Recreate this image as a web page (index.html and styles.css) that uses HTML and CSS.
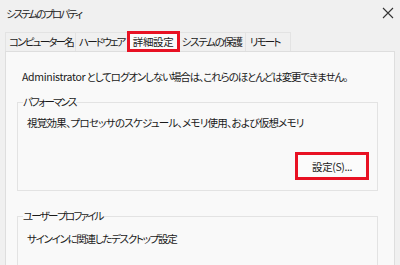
FILE: index.html
```html
<!DOCTYPE html>
<html lang="ja">
<head>
<meta charset="utf-8">
<link rel="stylesheet" href="styles.css">
</head>
<body>
<div class="window">
  <div class="titlebar">
    <span class="title">システムのプロパティ</span>
    <span class="close">
      <svg width="12" height="12" viewBox="0 0 12 12"><path d="M1 1L11 11M11 1L1 11" stroke="#333" stroke-width="1.1" fill="none"/></svg>
    </span>
  </div>
  <div class="tabs">
    <div class="tab">コンピューター名</div>
    <div class="tab">ハードウェア</div>
    <div class="tab selected">詳細設定</div>
    <div class="tab wide">システムの保護</div>
    <div class="tab last">リモート</div>
  </div>
  <div class="panel">
    <p class="notice"><span class="latin">Administrator</span> としてログオンしない場合は、これらのほとんどは変更できません。</p>
    <fieldset class="group perf">
      <legend>パフォーマンス</legend>
      <p class="desc">視覚効果、プロセッサのスケジュール、メモリ使用、および仮想メモリ</p>
      <div class="actions"><button class="btn highlighted">設定(S)...</button></div>
    </fieldset>
    <fieldset class="group profile">
      <legend>ユーザー プロファイル</legend>
      <p class="desc">サインインに関連したデスクトップ設定</p>
      <div class="actions"><button class="btn">設定(E)...</button></div>
    </fieldset>
  </div>
</div>
</body>
</html>
```
FILE: styles.css
```css
html, body {
  margin: 0;
  padding: 0;
  width: 400px;
  height: 265px;
  overflow: hidden;
  background: #f0f0f0;
  font-family: "Noto Sans CJK JP", "Noto Sans", sans-serif;
  font-size: 10.5px;
  font-feature-settings: "palt";
  color: #1a1a1a;
}
.latin {
  letter-spacing: -0.3px;
}
.window {
  display: flex;
  flex-direction: column;
}
.titlebar {
  height: 26px;
  display: flex;
  align-items: center;
  justify-content: space-between;
  padding: 0 6px 0 6px;
}
.title {
  color: #222;
  letter-spacing: -2px;
}
.close {
  display: flex;
  width: 12px;
  height: 12px;
}
.tabs {
  display: flex;
  margin-top: 6px;
  padding-left: 5px;
  height: 19px;
  align-items: flex-end;
}
.tab {
  height: 18px;
  line-height: 18px;
  padding: 0 2px 0 3px;
  border: 1px solid #e3e3e3;
  border-bottom: none;
  border-left: none;
  background: #f0f0f0;
  color: #1a1a1a;
  letter-spacing: -1.8px;
}
.tab:first-child { border-left: 1px solid #e3e3e3; }
.tab.wide { letter-spacing: -1.3px; padding: 0 3px; }
.tab.last { padding: 0 10px 0 4px; }
.tab.selected {
  outline: 3px solid #e81123;
  outline-offset: -2px;
  background: #fbfbfb;
  position: relative;
  z-index: 1;
  padding: 0 4px 0 5px;
  letter-spacing: -0.3px;
}
.panel {
  margin: 0 5px;
  height: 220px;
  background: #f9f9f9;
  border: 1px solid #dedede;
  padding: 0 16px 0 11px;
}
.notice {
  margin: 17px 0 0 5px;
  line-height: 16px;
  white-space: nowrap;
  letter-spacing: -1.1px;
}
.group {
  margin: 10px 0 0 0;
  padding: 0 0 0 9px;
  border: 1px solid #e3e3e3;
  border-radius: 0;
}
.group legend {
  padding: 0;
  margin-left: -4px;
  line-height: 14px;
  letter-spacing: -1.8px;
}
.desc {
  margin: 6px 0 0 0;
  line-height: 16px;
  white-space: nowrap;
  letter-spacing: -1.3px;
}
.perf .desc { letter-spacing: -0.75px; }
.profile .desc { margin-top: 8px; }
.actions {
  display: flex;
  justify-content: flex-end;
  padding-right: 8px;
}
.perf .actions { margin-top: 21px; height: 38px; }
.profile { margin-top: 18px; }
.profile .actions { margin-top: 20px; }
.btn {
  font: inherit;
  letter-spacing: -0.4px;
  width: 74px;
  height: 28px;
  border: 1px solid #d0d0d0;
  border-radius: 3px;
  background: #fdfdfd;
  color: #1a1a1a;
  padding: 0;
}
.btn.highlighted {
  border: 3px solid #e81123;
  border-radius: 0;
  background: #fbfbfb;
}
```
